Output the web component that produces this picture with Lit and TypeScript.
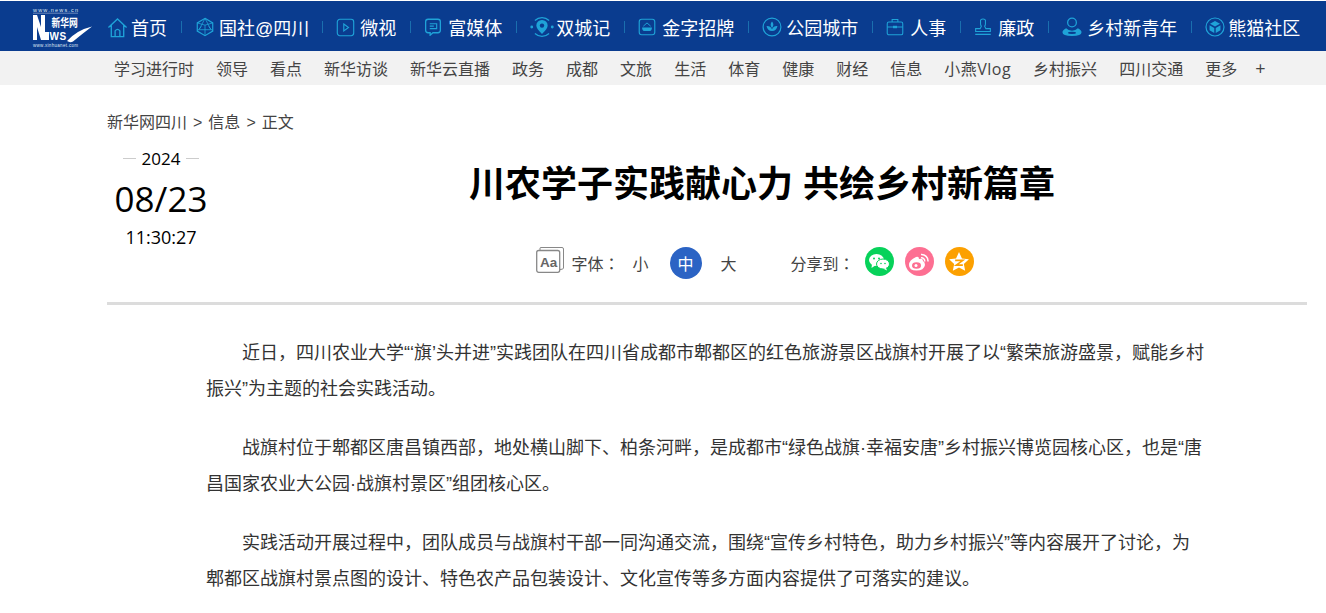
import { LitElement, html, css, svg } from "lit";
import { customElement } from "lit/decorators.js";

const C = "#1fa3d8";
const D = "#0a3c8f";
const icons: Record<string, any> = {
  home: svg`<path d="M1.5 11 L11 2 L20.5 11 M4.5 8.5 V20.5 H17.5 V8.5 M8.5 20.5 V14.5 Q11 11.5 13.5 14.5 V20.5" fill="none" stroke="${C}" stroke-width="1.4"/>`,
  guo: svg`<path d="M11 1.5 L19.5 6.5 V15.5 L11 20.5 L2.5 15.5 V6.5 Z" fill="none" stroke="${C}" stroke-width="1.3"/><path d="M11 1.5 L4.5 14 H17.5 Z M2.5 6.5 L11 9 L19.5 6.5 M11 9 L11 20.5 M2.5 15.5 L7 10.5 M19.5 15.5 L15 10.5" fill="none" stroke="${C}" stroke-width=".9"/>`,
  video: svg`<rect x="1.5" y="1.5" width="19" height="19" rx="3" fill="none" stroke="${C}" stroke-width="1.3"/><path d="M9 7 L14.5 11 L9 15 Z" fill="none" stroke="${C}" stroke-width="1.3"/>`,
  media: svg`<path d="M5 1.5 H17 Q20 1.5 20 4.5 V15 Q20 18 17 18 H11 L7.5 21 V18 H5 Q2 18 2 15 V4.5 Q2 1.5 5 1.5 Z" fill="none" stroke="${C}" stroke-width="1.6"/><path d="M7 7 H15.5 V13 H7 M7 10 H12" fill="none" stroke="${C}" stroke-width="1.4"/>`,
  city: svg`<path d="M4.5 5 A9.6 9.6 0 0 1 17.5 5 M4.5 17 A9.6 9.6 0 0 0 17.5 17" fill="none" stroke="${C}" stroke-width="1.2"/><circle cx="1.6" cy="11" r="1.3" fill="${C}"/><circle cx="20.4" cy="11" r="1.3" fill="${C}"/><path d="M11 4.500 A5.200 5.200 0 0 1 16.200 9.700 Q16.200 12.500 11 17.500 Q5.800 12.500 5.800 9.700 A5.200 5.200 0 0 1 11 4.500 Z" fill="${C}"/><circle cx="11" cy="9.700" r="2" fill="${D}"/>`,
  gold: svg`<rect x="1.5" y="1.5" width="19" height="19" rx="3" fill="none" stroke="${C}" stroke-width="1.4"/><path d="M6.5 10 L11 6 L15.5 10" fill="none" stroke="${C}" stroke-width="1.2"/><path d="M5 11.5 H17 Q17 16 13.5 16 H8.5 Q5 16 5 11.5 Z" fill="${C}"/>`,
  park: svg`<circle cx="11" cy="11" r="9.8" fill="none" stroke="${C}" stroke-width="1.3"/><path d="M11 5 Q14 8.5 11 12 Q8 8.5 11 5 Z M5 10 Q9 9.5 11 13.5 Q13 9.5 17 10 Q16 15.5 11 15.5 Q6 15.5 5 10 Z" fill="${C}"/>`,
  hr: svg`<rect x="1.5" y="5" width="19" height="15.5" rx="2" fill="none" stroke="${C}" stroke-width="1.3"/><path d="M7.5 5 V1.8 H14.5 V5 M1.5 11 H8.5 M13.5 11 H20.5" fill="none" stroke="${C}" stroke-width="1.3"/><rect x="8.5" y="9.5" width="5" height="3" fill="${C}"/>`,
  stamp: svg`<path d="M8 2.5 Q11 0 14 2.5 V7 Q14 9 13 10 L14.5 13 H20 V16.5 H2 V13 H7.5 L9 10 Q8 9 8 7 Z" fill="none" stroke="${C}" stroke-width="1.3"/><path d="M1.5 20 H20.5" stroke="${C}" stroke-width="1.6"/>`,
  youth: svg`<circle cx="11" cy="6" r="4.8" fill="none" stroke="${C}" stroke-width="1.4"/><path d="M4.5 12.5 Q.5 15 .5 16.8 Q.5 21 11 21 Q21.500 21 21.500 16.800 Q21.500 15 17.500 12.500 Q15 15 11 15 Q7 15 4.500 12.500 Z" fill="${C}"/><ellipse cx="11" cy="17.400" rx="4.500" ry="1.300" fill="${D}"/>`,
  panda: svg`<circle cx="11" cy="11" r="9.900" fill="none" stroke="${C}" stroke-width="1.300"/><path d="M11 4.500 L16.500 7.500 L11 10.500 L5.500 7.500 Z M5 9 L10.200 12 V17.500 L5 14.500 Z M17 9 L11.800 12 V17.500 L17 14.500 Z" fill="${C}"/>`,
};

// [icon, label, icon size, icon + gap offset]
const top: [string, string, number, number][] = [
  ["home", "首页", 21, 24], ["guo", "国社@四川", 20, 24], ["video", "微视", 19, 24], ["media", "富媒体", 18, 24], ["city", "双城记", 24, 26],
  ["gold", "金字招牌", 18, 24], ["park", "公园城市", 20, 24], ["hr", "人事", 18, 24], ["stamp", "廉政", 18, 24], ["youth", "乡村新青年", 20, 25], ["panda", "熊猫社区", 20, 23],
];
const sub = ["学习进行时","领导","看点","新华访谈","新华云直播","政务","成都","文旅","生活","体育","健康","财经","信息","小燕Vlog","乡村振兴","四川交通","更多"];
const paras = [
  "近日，四川农业大学“‘旗’头并进”实践团队在四川省成都市郫都区的红色旅游景区战旗村开展了以“繁荣旅游盛景，赋能乡村振兴”为主题的社会实践活动。",
  "战旗村位于郫都区唐昌镇西部，地处横山脚下、柏条河畔，是成都市“绿色战旗·幸福安唐”乡村振兴博览园核心区，也是“唐昌国家农业大公园·战旗村景区”组团核心区。",
  "实践活动开展过程中，团队成员与战旗村干部一同沟通交流，围绕“宣传乡村特色，助力乡村振兴”等内容展开了讨论，为郫都区战旗村景点图的设计、特色农产品包装设计、文化宣传等多方面内容提供了可落实的建议。",
];

@customElement("app-root")
export class AppRoot extends LitElement {
  static styles = css`
    :host { display: block; height: 613px; overflow: hidden; background: #fff;
      font-family: "Liberation Sans", "Noto Sans CJK SC", sans-serif; font-weight: 400; color: #333; }
    .top { height: 48px; margin-top: 1px; padding: 2px 0 0 32px; background: #0a3c8f; display: flex; align-items: center; }
    .logo { width: 60px; height: 40px; flex: none; margin: 1px 15px 0 0; }
    .tn { display: flex; align-items: center; height: 48px; }
    .ti { display: flex; align-items: center; color: #fff; font-size: 18px; white-space: nowrap; }
    .ti.at { margin-right: -1px; }
    .ic { display: flex; flex: none; align-items: center; }
    .sep { width: 1px; height: 12px; background: #1a6fae; margin: 0 13.5px; flex: none; }
    .sub { height: 33px; padding: 0 0 1px 114px; background: #f2f2f2; display: flex; align-items: center; gap: 22px; font-size: 16px; color: #444; white-space: nowrap; font-family: "Open Sans", "Noto Sans CJK SC", sans-serif; }
    .vlog { letter-spacing: .5px; }
    .plus { margin-left: -4px; font-size: 18px; }
    .crumb { margin: 27px 0 0 107px; font-size: 16px; height: 22px; line-height: 22px; color: #444; display: flex; gap: 6px; }
    .head { display: flex; margin-left: 107px; width: 1200px; height: 168px; border-bottom: 3px solid #dcdcdc; }
    .date { width: 108px; flex: none; margin-top: 13px; text-align: center; color: #000; font-family: "Open Sans", sans-serif; }
    .year { display: flex; justify-content: center; align-items: center; gap: 6px; font-size: 17px; height: 22px; }
    .year i { width: 13px; height: 1px; background: #ccc; }
    .md { font-size: 35px; line-height: 51px; margin-top: 4px; }
    .time { font-size: 18px; line-height: 26px; }
    .mid { flex: 1; display: flex; flex-direction: column; align-items: center; padding-left: 2px; }
    h1 { margin: 26px 0 0; font-size: 36px; line-height: 50px; font-weight: 700; color: #000; white-space: nowrap; }
    .tools { display: flex; align-items: center; font-size: 16px; margin: 37px 14px 0 0; height: 32px; color: #444; }
    .colon { font-family: "Noto Sans CJK TC", sans-serif; }
    .aa { flex: none; align-self: flex-start; margin-right: 7px; }
    .zh { width: 32px; height: 32px; border-radius: 50%; background: #2b63c4; color: #fff; display: flex; align-items: center; justify-content: center; }
    .small { margin: 0 21px 0 13px; }
    .big { margin: 0 54px 0 19px; }
    .circ { width: 29px; height: 29px; border-radius: 50%; display: flex; align-items: center; justify-content: center; flex: none; align-self: flex-start; margin-left: 11px; }
    .wx { background: #07d25a; margin-left: 10px; }
    .wb { background: #fd6f92; }
    .qz { background: #fca000; }
    .article { margin: 30px 0 0 206px; width: 1000px; font-size: 18px; line-height: 36px; color: #333; }
    p { margin: 0 0 23px; text-indent: 2em; }
  `;

  render() {
    return html`
      <div class="top">
        <svg class="logo" viewBox="0 0 60 40">
          <text x="1" y="3.500" font-size="5.500" textLength="45" fill="#dfe6f2" font-family="Liberation Sans">www.news.cn</text>
          <path d="M1 5.200 H46" stroke="#cfd8e8" stroke-width=".5"/>
          <path d="M1 7 H5 L9 19 V7 H13 V32 H9 L5 19 V32 H1 Z" fill="#fff"/>
          <path d="M13 24 H17 V32 H13 Z" fill="#fff"/>
          <text transform="translate(19.500 19) scale(1 1.350)" font-size="8.800" font-weight="700" fill="#fff">新华网</text>
          <text x="17.500" y="32" font-size="10" font-weight="700" letter-spacing=".5" fill="#fff" font-family="Liberation Sans">WS</text>
          <path d="M35 33 Q45 22 60 18.500 Q50 26 41 33.500 Q38 35 35 33 Z" fill="#fff"/>
          <text x="1" y="38.500" font-size="4.500" textLength="45" fill="#dfe6f2" font-family="Liberation Sans">www.xinhuanet.com</text>
        </svg>
        <div class="tn">
          ${top.map(([k, t, s, o], i) => html`${i ? html`<span class="sep"></span>` : ""}<span class="ti ${t.includes("@") ? "at" : ""}"><span class="ic" style="width:${o}px"><svg width=${s} height=${s} viewBox="0 0 22 22">${icons[k]}</svg></span>${t}</span>`)}
        </div>
      </div>
      <nav class="sub">${sub.map((s) => html`<span class=${s.includes("Vlog") ? "vlog" : ""}>${s}</span>`)}<span class="plus">+</span></nav>
      <div class="crumb"><span>新华网四川</span><span>&gt;</span><span>信息</span><span>&gt;</span><span>正文</span></div>
      <div class="head">
        <div class="date">
          <div class="year"><i></i>2024<i></i></div>
          <div class="md">08/23</div>
          <div class="time">11:30:27</div>
        </div>
        <div class="mid">
          <h1>川农学子实践献心力 共绘乡村新篇章</h1>
          <div class="tools">
            <svg class="aa" width="28" height="26" viewBox="0 0 28 26"><rect x=".7" y="3.500" width="23" height="21.800" rx="2" fill="#fff" stroke="#888" stroke-width="1.300"/><path d="M4 3 V1 Q4 .5 5 .5 H26 Q27.500 .5 27.500 2 V21 Q27.500 22.500 24 22.500" fill="none" stroke="#888"/><text x="4" y="20" font-size="13.500" font-weight="700" fill="#666" font-family="Liberation Sans">Aa</text></svg>
            <span>字体<span class="colon">：</span></span>
            <span class="small">小</span><span class="zh">中</span><span class="big">大</span>
            <span>分享到<span class="colon">：</span></span>
            <span class="circ wx"><svg width="22" height="18" viewBox="0 0 22 18"><ellipse cx="8.500" cy="7" rx="7.500" ry="6" fill="#fff"/><path d="M4 11 L3.500 15 L8 12Z" fill="#fff"/><ellipse cx="15" cy="11" rx="6.500" ry="5" fill="#fff" stroke="#07d25a"/><path d="M18 15 L19 17.500 L15 15.500Z" fill="#fff"/><circle cx="6" cy="5.500" r="1" fill="#07d25a"/><circle cx="11" cy="5.500" r="1" fill="#07d25a"/><circle cx="13" cy="10.500" r=".8" fill="#07d25a"/><circle cx="17" cy="10.500" r=".8" fill="#07d25a"/></svg></span>
            <span class="circ wb"><svg width="22" height="20" viewBox="0 0 22 20"><path d="M1 13 Q1 8 8 5 Q11 4 11 7 Q15 6 15 9 Q17 10 17 13 Q16 18.500 8.500 18.500 Q1 18.500 1 13 Z" fill="#fff"/><ellipse cx="8.500" cy="13.500" rx="4.500" ry="3.200" fill="#fd6f92"/><circle cx="8" cy="13.500" r="1.500" fill="#fff"/><path d="M13 2.500 A6.500 6.500 0 0 1 20 9.500 M13 5.800 A3.300 3.300 0 0 1 16.700 9.500" fill="none" stroke="#fff" stroke-width="1.500"/></svg></span>
            <span class="circ qz"><svg width="22" height="22" viewBox="0 0 20 20"><path d="M10 1 L12.700 6.800 L19 7.500 L14.400 11.800 L15.600 18 L10 15 L4.400 18 L5.600 11.800 L1 7.500 L7.300 6.800 Z" fill="#fff"/><path d="M6.500 8.500 H13.500 L7.500 12.800 H13.500" fill="none" stroke="#fca000" stroke-width="1.500"/></svg></span>
          </div>
        </div>
      </div>
      <div class="article">${paras.map((p) => html`<p>${p}</p>`)}</div>
    `;
  }
}
